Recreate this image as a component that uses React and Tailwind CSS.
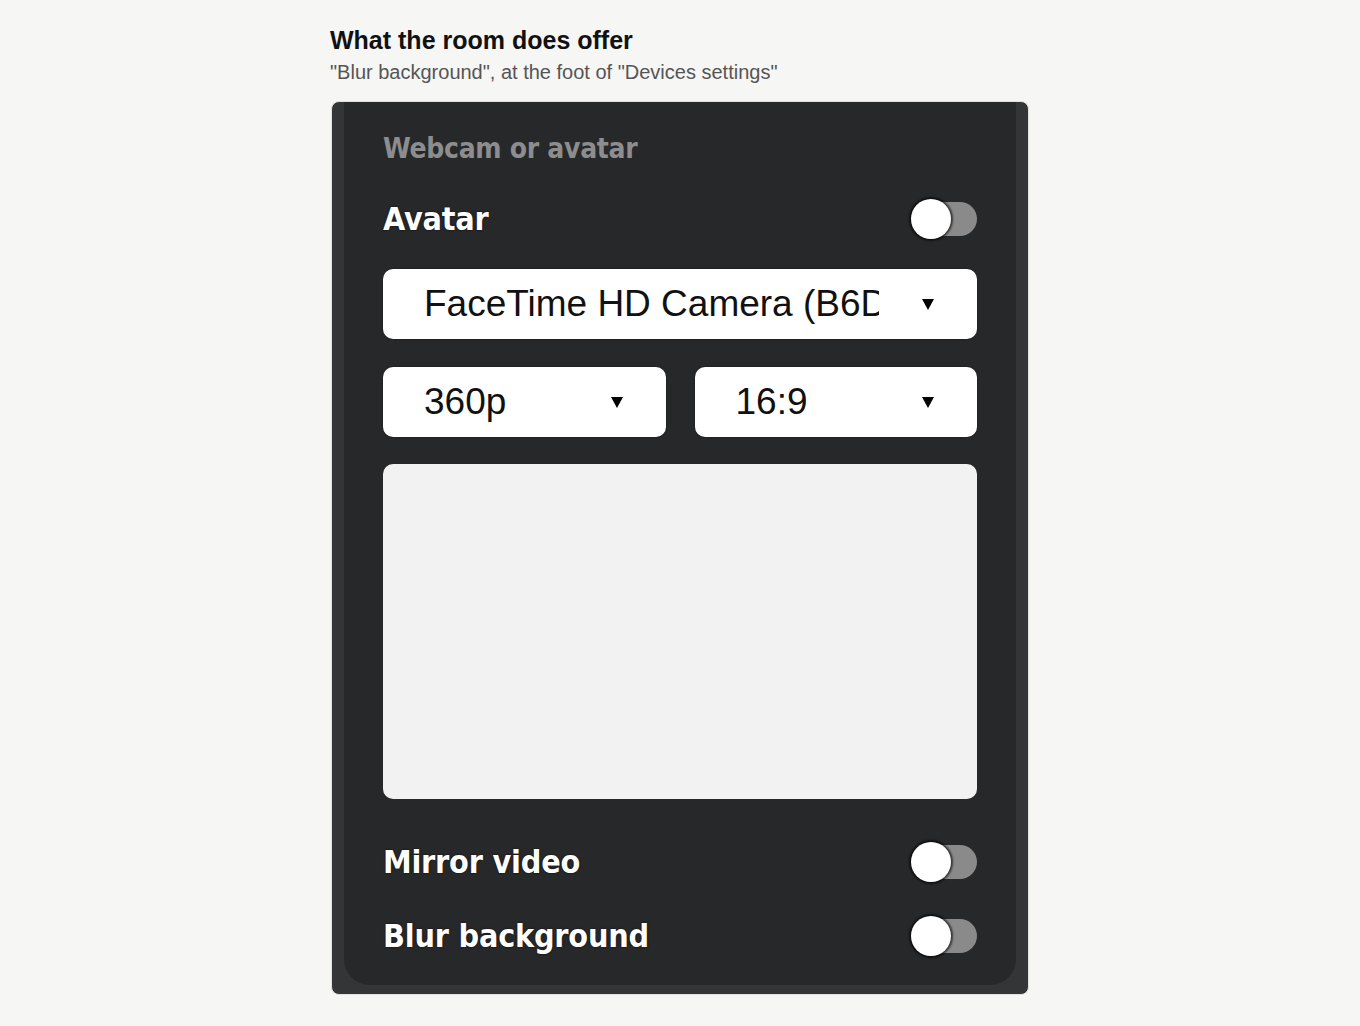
import React from 'react';

function Toggle() {
  return (
    <div className="relative w-[66px] h-[40px] flex items-center">
      <div className="ml-auto w-[56px] h-[34px] rounded-full bg-[#8a8a8a]" />
      <div className="absolute left-0 top-0 w-[40px] h-[40px] rounded-full bg-white shadow-[0_0_2px_2px_rgba(0,0,0,0.6)]" />
    </div>
  );
}

function Select({ label, className, textWidth }) {
  return (
    <div className={`h-[70px] bg-white rounded-[10px] flex items-center pl-[41px] pr-[43px] shadow-[0_0_2px_rgba(0,0,0,0.5)] ${className}`}>
      <span className={`${textWidth} overflow-hidden whitespace-nowrap text-[37px] text-[#111] font-['Liberation_Sans',Arial,sans-serif] leading-[46px]`}>
        {label}
      </span>
      <svg className="ml-auto" width="12" height="11" viewBox="0 0 12 11">
        <path d="M0 0h12L6 11z" fill="#000" />
      </svg>
    </div>
  );
}

export default function App() {
  const label = "text-white text-[32px] font-bold tracking-[-0.2px] font-['DejaVu_Sans_Condensed','DejaVu_Sans',sans-serif] [text-shadow:0_0_2px_rgba(0,0,0,0.9)]";
  return (
    <div className="min-h-[1026px] bg-[#f6f6f4] pt-[25px]">
      <div className="w-[700px] mx-auto">
        <h2 className="text-[25px] font-bold text-[#111] leading-[30px] font-['Liberation_Sans',Arial,sans-serif]">
          What the room does offer
        </h2>
        <p className="mt-[4px] text-[20px] text-[#555] leading-[26px] font-['Liberation_Sans',Arial,sans-serif]">
          "Blur background", at the foot of "Devices settings"
        </p>

        <div className="mt-[16px] ml-[1px] w-[698px] h-[894px] rounded-[8px] bg-[#343537] border border-[#e2e2e0] overflow-hidden flex flex-col">
          <div className="mx-[12px] h-[883px] bg-[#27282a] rounded-b-[26px] px-[39px] pt-[27px] flex flex-col">
            <div className="h-[40px] flex items-center text-[28px] text-[#8d8d8d] font-['DejaVu_Sans_Condensed','DejaVu_Sans',sans-serif] font-bold tracking-[-0.3px]">
              Webcam or avatar
            </div>
            <div className="mt-[30px] h-[40px] flex items-center justify-between">
              <span className={label}>Avatar</span>
              <Toggle />
            </div>
            <Select label="FaceTime HD Camera (B6D8:1234)" textWidth="w-[455px]" className="mt-[30px]" />
            <div className="mt-[28px] flex gap-[29px]">
              <Select label="360p" textWidth="w-[150px]" className="flex-1" />
              <Select label="16:9" textWidth="w-[150px]" className="flex-1" />
            </div>
            <div className="mt-[27px] h-[335px] bg-[#f2f2f2] rounded-[10px]" />
            <div className="mt-[43px] h-[40px] flex items-center justify-between">
              <span className={label}>Mirror video</span>
              <Toggle />
            </div>
            <div className="mt-[34px] h-[40px] flex items-center justify-between">
              <span className={label}>Blur background</span>
              <Toggle />
            </div>
          </div>
        </div>
      </div>
    </div>
  );
}
